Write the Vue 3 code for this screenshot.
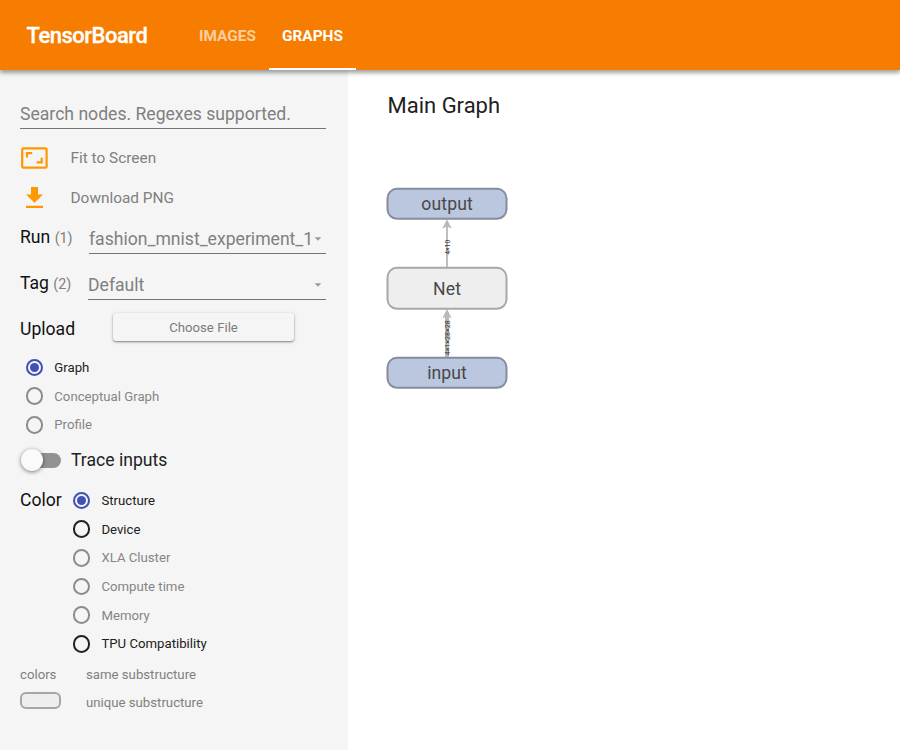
<script setup>
const tabs = [
  { label: 'IMAGES', active: false },
  { label: 'GRAPHS', active: true },
]
const selectors = [
  { label: 'Run', count: 1, value: 'fashion_mnist_experiment_1', cls: 'run' },
  { label: 'Tag', count: 2, value: 'Default', cls: 'tag' },
]
const graphTypes = [
  { label: 'Graph', state: 'checked' },
  { label: 'Conceptual Graph', state: 'disabled' },
  { label: 'Profile', state: 'disabled' },
]
const colorModes = [
  { label: 'Structure', state: 'checked' },
  { label: 'Device', state: 'enabled' },
  { label: 'XLA Cluster', state: 'disabled' },
  { label: 'Compute time', state: 'disabled' },
  { label: 'Memory', state: 'disabled' },
  { label: 'TPU Compatibility', state: 'enabled' },
]
</script>

<template>
  <div class="app">
    <header class="toolbar">
      <div class="brand">TensorBoard</div>
      <nav class="tabs">
        <div v-for="t in tabs" :key="t.label" class="tab" :class="{ active: t.active }">{{ t.label }}</div>
      </nav>
    </header>

    <div class="body">
      <aside class="sidebar">
        <div class="search"><span>Search nodes. Regexes supported.</span></div>

        <div class="action">
          <svg class="fit" width="28" height="22" viewBox="0 0 28 22">
            <rect x="1.2" y="1.4" width="24.4" height="19.2" rx="1.2" fill="none" stroke="#ff9800" stroke-width="2.2" />
            <path d="M6 10.500V6.200H11.200M15.700 15.400H20.700V10.800" fill="none" stroke="#ff9800" stroke-width="2.200" />
          </svg>
          <span>Fit to Screen</span>
        </div>
        <div class="action">
          <svg class="fit" width="28" height="22" viewBox="0 0 28 22">
            <path d="M10 0h7v7.500h5l-8.500 8.300L5 7.500h5zM5 18.700h17v2.300H5z" fill="#ff9800" />
          </svg>
          <span>Download PNG</span>
        </div>

        <div v-for="s in selectors" :key="s.label" class="select-row" :class="s.cls">
          <div class="title">{{ s.label }} <small>({{ s.count }})</small></div>
          <div class="select">
            <span>{{ s.value }}</span>
            <svg width="8" height="4" viewBox="0 0 8 4"><path d="M.7.300h6.600L4 3.700z" fill="#999" /></svg>
          </div>
        </div>

        <div class="upload">
          <span class="title">Upload</span>
          <button>Choose File</button>
        </div>

        <div class="radios types">
          <div v-for="r in graphTypes" :key="r.label" class="radio" :class="r.state">
            <i class="dot"></i><span>{{ r.label }}</span>
          </div>
        </div>

        <div class="trace">
          <div class="switch"><i class="knob"></i></div>
          <span>Trace inputs</span>
        </div>

        <div class="color">
          <div class="title">Color</div>
          <div class="radios">
            <div v-for="r in colorModes" :key="r.label" class="radio" :class="r.state">
              <i class="dot"></i><span>{{ r.label }}</span>
            </div>
          </div>
        </div>

        <div class="legend">
          <span>colors</span><span>same substructure</span>
          <i class="swatch"></i><span>unique substructure</span>
        </div>
      </aside>

      <main class="graph">
        <h1>Main Graph</h1>
        <svg class="canvas" width="130" height="210" viewBox="382 183 130 210">
          <g fill="none" stroke="#b9b9b9">
            <path d="M447 267V222" stroke-width="1.800" />
            <path d="M447 357V314" stroke-width="4" />
          </g>
          <g fill="#b9b9b9">
            <path d="M447 219.300l4.700 9.200-4.700-2-4.700 2z" />
            <path d="M447 309l4.700 9.200-4.700-2-4.700 2z" />
          </g>
          <g stroke-width="2">
            <rect x="387.500" y="188.800" width="119" height="30" rx="9.500" fill="#bbc6df" stroke="#858c9e" />
            <rect x="387.500" y="267.800" width="119" height="41" rx="9.500" fill="#eee" stroke="#a8a8a8" />
            <rect x="387.500" y="357.800" width="119" height="30" rx="9.500" fill="#bbc6df" stroke="#858c9e" />
          </g>
          <g class="node-labels" text-anchor="middle">
            <text x="447" y="210" textLength="51.500">output</text>
            <text x="447" y="295" textLength="28">Net</text>
            <text x="447" y="379" textLength="39.500">input</text>
          </g>
          <g class="edge-labels" text-anchor="middle">
            <text transform="translate(449.700 247.300) rotate(-90)" textLength="15" lengthAdjust="spacingAndGlyphs">4×10</text>
            <text transform="translate(449.700 337.800) rotate(-90)" textLength="35" lengthAdjust="spacingAndGlyphs">4×1×28×28</text>
          </g>
        </svg>
      </main>
    </div>
  </div>
</template>

<style>
body { margin: 0; overflow: hidden; }
</style>

<style scoped>
.app {
  display: flex;
  flex-direction: column;
  width: 900px;
  height: 750px;
  overflow: hidden;
  background: #fff;
  color: #212121;
  font-family: Roboto, "Liberation Sans", sans-serif;
}
.toolbar {
  position: relative;
  z-index: 1;
  display: flex;
  flex: none;
  height: 70px;
  box-sizing: border-box;
  padding-left: 26.600px;
  background: #f77d00;
  color: #fff;
  box-shadow: 0 3px 4px rgba(0, 0, 0, .36);
}
.brand { width: 159.400px; font-size: 22px; font-weight: 500; line-height: 71px; letter-spacing: -.5px; -webkit-text-stroke: .3px #fff; }
.tabs { display: flex; }
.tab {
  box-sizing: border-box;
  height: 70px;
  padding: 0 13px;
  border-bottom: 2px solid transparent;
  font-size: 15.400px;
  font-weight: 700;
  line-height: 72px;
  color: rgba(255, 255, 255, .65);
}
.tab.active { color: #fff; border-color: #fff; }
.body { display: flex; flex: 1; min-height: 0; }
.sidebar { flex: none; width: 348px; box-sizing: border-box; padding: 28px 22px 0 20px; background: #f5f5f5; }
.search {
  height: 30px;
  margin-bottom: 9px;
  border-bottom: 1px solid #757575;
  color: #808080;
  font-size: 17.600px;
  line-height: 32px;
  white-space: nowrap;
}
.action { display: flex; align-items: center; gap: 21.500px; height: 40px; color: #808080; font-size: 15.400px; }
.fit { display: block; margin-left: 1px; }
.title { color: #111; font-size: 17.600px; }
.select-row { display: flex; justify-content: space-between; height: 36px; }
.select-row .title { line-height: 38px; white-space: nowrap; }
small { color: #808080; font-size: 14.300px; }
.select {
  display: flex;
  align-items: center;
  justify-content: space-between;
  box-sizing: border-box;
  height: 36px;
  padding: 6px 4px 0 0;
  border-bottom: 1px solid #757575;
  color: #808080;
  font-size: 17.600px;
  white-space: nowrap;
}
.run .select { width: 237px; }
.tag .select { width: 238px; }
.tag { margin-top: 10px; }
.upload { display: flex; align-items: center; height: 28px; margin-top: 13px; }
.upload .title { width: 93px; padding-top: 3px; }
.upload button {
  width: 181px;
  height: 28px;
  padding: 0;
  border: 0;
  border-radius: 3px;
  background: #f5f5f5;
  box-shadow: 0 1px 2px rgba(0, 0, 0, .42), 0 1px 5px rgba(0, 0, 0, .1);
  color: #7b7b7b;
  font: 13.200px Roboto, sans-serif;
}
.radio { display: flex; align-items: center; gap: 11px; height: 28.700px; font-size: 13.200px; color: #212121; }
.radio.disabled { color: #858585; }
.dot {
  display: flex;
  align-items: center;
  justify-content: center;
  width: 17.600px;
  height: 17.600px;
  box-sizing: border-box;
  border: 2px solid #212121;
  border-radius: 50%;
}
.disabled .dot { border-color: #8c8c8c; }
.checked .dot { border-color: #3f51b5; }
.checked .dot::after { content: ""; width: 9px; height: 9px; border-radius: 50%; background: #3f51b5; }
.types { margin: 12px 0 0 5.700px; }
.trace { display: flex; align-items: center; gap: 10px; height: 30px; margin-top: 6px; font-size: 17.600px; }
.switch { display: flex; align-items: center; width: 41px; height: 15px; border-radius: 8px; background: linear-gradient(90deg, transparent 12px, #929292 12px); }
.knob { flex: none; width: 22px; height: 22px; border-radius: 50%; background: #fafafa; box-shadow: 0 1px 4px rgba(0, 0, 0, .5); margin-left: 1px; }
.color { display: flex; margin-top: 11px; }
.color .title { width: 52.800px; line-height: 28px; }
.legend { display: grid; grid-template-columns: 66px 1fr; grid-auto-rows: 28px; align-items: center; margin-top: 2px; color: #808080; font-size: 13.200px; }
.swatch { width: 41px; height: 17px; box-sizing: border-box; border: 2px solid #a6a6a6; border-radius: 6px; background: #eee; margin-top: -4px; }
.graph { flex: 1; padding: 21px 0 0 34px; }
h1 { margin: 0 0 62px 5.500px; font-size: 22px; font-weight: 400; line-height: 30px; }
.canvas { display: block; }
.node-labels { font-size: 17.600px; fill: #484848; }
.edge-labels { font-size: 6.800px; fill: #333; }
</style>
